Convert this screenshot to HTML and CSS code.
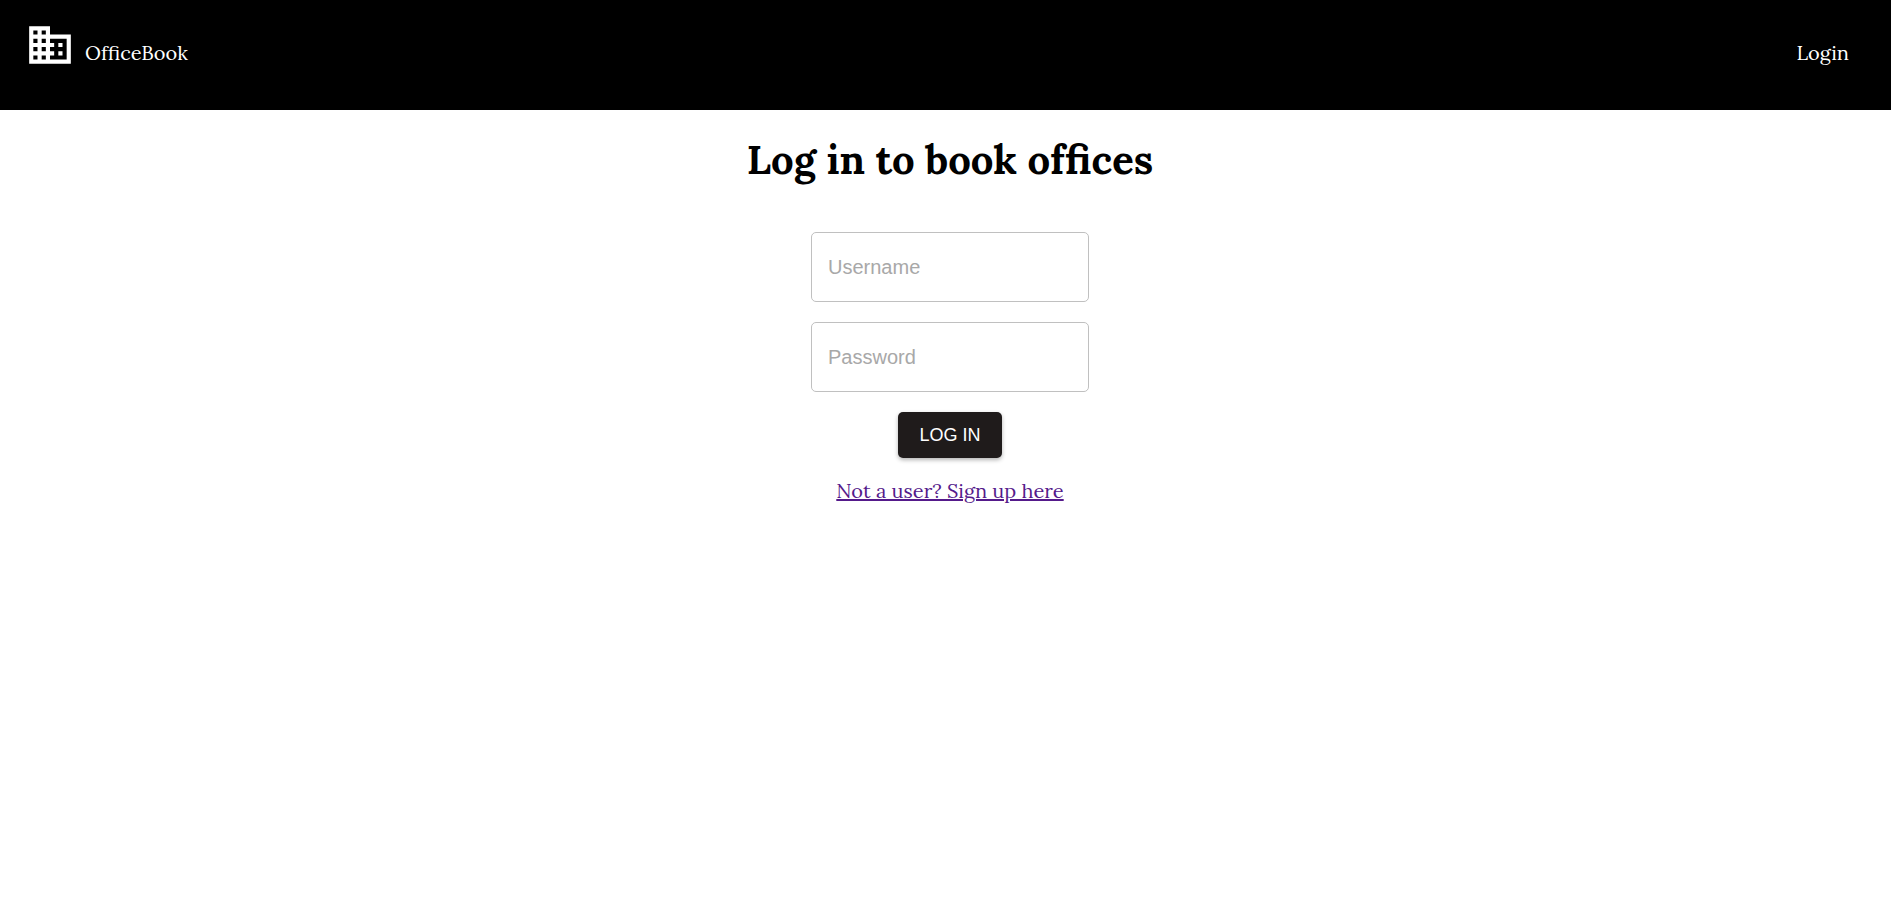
FILE: index.html
```html
<!DOCTYPE html>
<html lang="en">
<head>
<meta charset="utf-8">
<meta name="viewport" content="width=device-width, initial-scale=1">
<title>OfficeBook</title>
<link rel="stylesheet" href="styles.css">
</head>
<body>
<header class="navbar">
  <a class="brand" href="#">
    <svg class="brand-icon" viewBox="0 0 24 24" aria-hidden="true"><path d="M12 7V3H2v18h20V7H12zM6 19H4v-2h2v2zm0-4H4v-2h2v2zm0-4H4V9h2v2zm0-4H4V5h2v2zm4 12H8v-2h2v2zm0-4H8v-2h2v2zm0-4H8V9h2v2zm0-4H8V5h2v2zm10 12h-8v-2h2v-2h-2v-2h2v-2h-2V9h8v10zm-2-8h-2v2h2v-2zm0 4h-2v2h2v-2z"/></svg>
    <span class="nav-text">OfficeBook</span>
  </a>
  <nav><a class="nav-text" href="#">Login</a></nav>
</header>
<main class="login">
  <h1 class="title">Log in to book offices</h1>
  <form class="form">
    <input class="field" type="text" placeholder="Username" aria-label="Username">
    <input class="field" type="password" placeholder="Password" aria-label="Password">
    <button class="submit" type="button">LOG IN</button>
  </form>
  <a class="signup" href="#">Not a user? Sign up here</a>
</main>
</body>
</html>
```

FILE: styles.css
```css
* {
  box-sizing: border-box;
}

body {
  margin: 0;
  background: #fff;
  color: #000;
  font-family: Lora, "Liberation Serif", serif;
  font-size: 20px;
}

.navbar {
  display: flex;
  justify-content: space-between;
  align-items: flex-start;
  min-height: 110px;
  padding: 20px 42px 20px 25px;
  background: #000;
}

.brand {
  display: flex;
  gap: 10px;
  text-decoration: none;
}

.brand-icon {
  width: 50px;
  height: 50px;
  fill: #fff;
}

.nav-text {
  display: block;
  padding-top: 20px;
  color: #fff;
  font-size: 20px;
  line-height: 26px;
  text-decoration: none;
}

.login {
  display: flex;
  flex-direction: column;
  align-items: center;
  padding: 24px 0 24px 9px;
}

.title {
  margin: 0 0 46px;
  font-size: 40px;
  line-height: 52px;
  font-weight: 700;
}

.form {
  display: flex;
  flex-direction: column;
  align-items: center;
  gap: 20px;
  margin-bottom: 20px;
}

.field {
  width: 278px;
  height: 70px;
  padding: 0 16px;
  border: 1px solid #c0c0c0;
  border-radius: 5px;
  background: #fff;
  font-family: "Liberation Sans", Arial, sans-serif;
  font-size: 20px;
}

.field::placeholder {
  color: #a8a8a8;
  opacity: 1;
}

.submit {
  padding: 8px 21px;
  border: 0;
  border-radius: 5px;
  background: #1f1b1b;
  color: #fff;
  font-family: "Liberation Sans", Arial, sans-serif;
  font-size: 18px;
  line-height: 30px;
  box-shadow: 0 2px 4px rgba(0, 0, 0, 0.3);
}

.signup {
  color: #551a8b;
  font-size: 20px;
  line-height: 26px;
  text-decoration-thickness: 2px;
}
```
